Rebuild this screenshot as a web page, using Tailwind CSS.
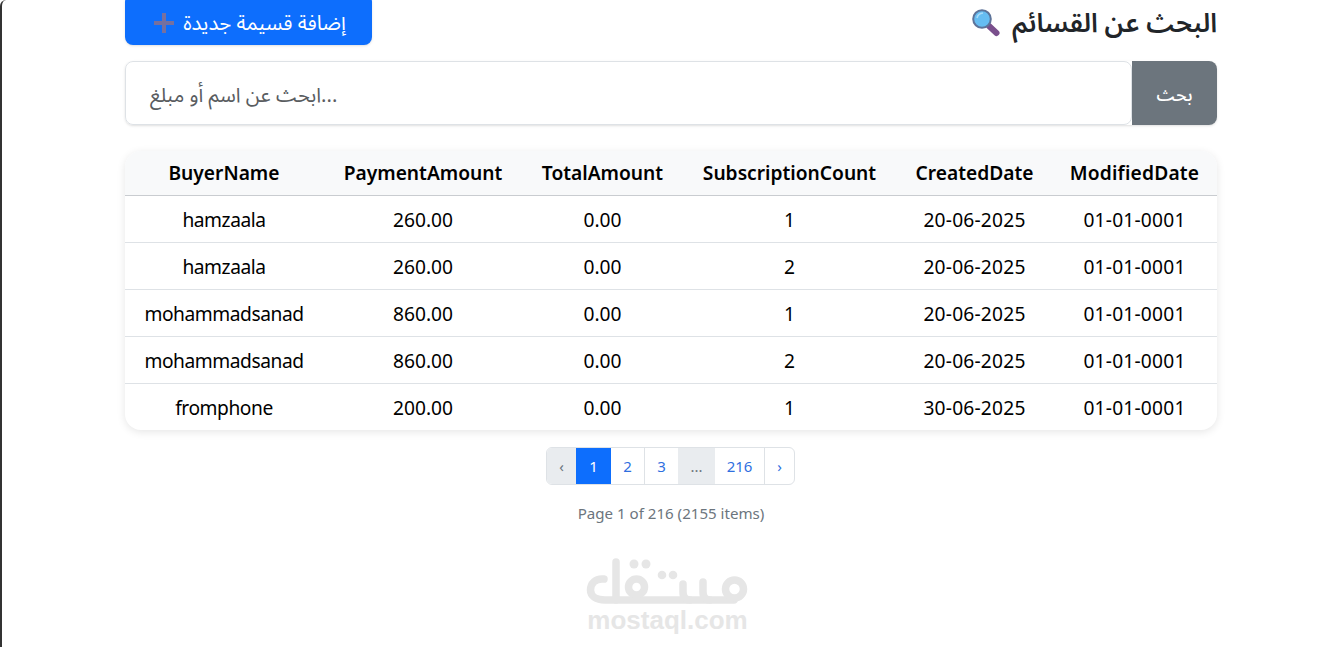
<!DOCTYPE html>
<html lang="ar">
<head>
<meta charset="utf-8">
<script src="https://cdn.jsdelivr.net/npm/@tailwindcss/browser@4"></script>
<title>Search</title>
</head>
<body class="bg-white font-['Noto_Sans','Noto_Sans_Arabic','DejaVu_Sans',sans-serif] text-[#212529]">
<div class="h-[647px] overflow-hidden border-l-2 border-[#333] rounded-tl-md relative">
  <div class="w-[1092px] ml-[123px]">
    <div class="flex items-center justify-between h-[45px]" dir="rtl">
      <h2 class="text-[26.4px] font-semibold leading-none flex items-center gap-3 text-[#212529]">البحث عن القسائم
        <svg width="28" height="28" viewBox="0 0 28 28">
          <path d="M17 17 L24.5 24" stroke="#7a4f8c" stroke-width="6" stroke-linecap="round"/>
          <circle cx="10" cy="10" r="8.8" fill="#66bdf2" stroke="#5d7399" stroke-width="2"/>
          <path d="M5 9 Q6 4.500 11 4" stroke="#a9dcf9" stroke-width="1.600" fill="none"/>
        </svg>
      </h2>
      <a class="w-[247px] h-[51px] self-end bg-[#0d6efd] text-white rounded-lg flex items-center justify-center gap-[9px] text-[20.4px] shadow-sm pl-[3px] pt-[6px]">إضافة قسيمة جديدة
        <svg width="20" height="20" viewBox="0 0 20 20"><path d="M10 0V20M0 10H20" stroke="#76709f" stroke-width="4"/></svg>
      </a>
    </div>
    <div class="flex mt-[16px] h-[64px] shadow-sm rounded-lg" dir="rtl">
      <button class="w-[85px] bg-[#6c757d] text-white text-[17.6px] font-medium rounded-r-lg pt-[2px]">بحث</button>
      <div class="flex-1 border border-[#dee2e6] rounded-lg flex items-center justify-end pl-6 pt-[2px] text-[20.2px] text-[#595c5f]">...ابحث عن اسم أو مبلغ</div>
    </div>
    <div class="mt-[26px] rounded-2xl overflow-hidden shadow-[0_2px_8px_rgba(0,0,0,0.1)]">
      <table class="w-full table-fixed text-center text-[19.2px] text-black [&_td]:pt-[4px] [&_th]:pt-[1px] [&_td:first-child]:tracking-[-0.45px] [&_td:nth-child(5)]:tracking-[0.2px] [&_td:nth-child(6)]:tracking-[0.2px]">
        <thead class="bg-[#f8f9fa]">
          <tr class="h-[44px] border-b border-[#c9ccd0]">
            <th class="w-[198px] font-semibold">BuyerName</th>
            <th class="w-[200px] font-semibold">PaymentAmount</th>
            <th class="w-[159px] font-semibold">TotalAmount</th>
            <th class="w-[215px] font-semibold">SubscriptionCount</th>
            <th class="w-[155px] font-semibold">CreatedDate</th>
            <th class="font-semibold tracking-[0.2px]">ModifiedDate</th>
          </tr>
        </thead>
        <tbody>
          <tr class="h-[47px] border-b border-[#dee2e6]"><td>hamzaala</td><td>260.00</td><td>0.00</td><td>1</td><td>20-06-2025</td><td>01-01-0001</td></tr>
          <tr class="h-[47px] border-b border-[#dee2e6]"><td>hamzaala</td><td>260.00</td><td>0.00</td><td>2</td><td>20-06-2025</td><td>01-01-0001</td></tr>
          <tr class="h-[47px] border-b border-[#dee2e6]"><td>mohammadsanad</td><td>860.00</td><td>0.00</td><td>1</td><td>20-06-2025</td><td>01-01-0001</td></tr>
          <tr class="h-[47px] border-b border-[#dee2e6]"><td>mohammadsanad</td><td>860.00</td><td>0.00</td><td>2</td><td>20-06-2025</td><td>01-01-0001</td></tr>
          <tr class="h-[47px]"><td>fromphone</td><td>200.00</td><td>0.00</td><td>1</td><td>30-06-2025</td><td>01-01-0001</td></tr>
        </tbody>
      </table>
    </div>
    <div class="flex justify-center mt-[17px] pr-[1px]">
      <div class="flex h-[38px] text-[15px] border border-[#dee2e6] rounded-md overflow-hidden text-[#2f6fdf]">
        <span class="w-[29px] bg-[#e9ecef] text-[#6c757d] flex items-center justify-center">‹</span>
        <span class="w-[35px] bg-[#0d6efd] text-white flex items-center justify-center">1</span>
        <span class="w-[34px] border-r border-[#dee2e6] flex items-center justify-center">2</span>
        <span class="w-[33px] flex items-center justify-center">3</span>
        <span class="w-[37px] bg-[#e9ecef] text-[#6c757d] flex items-center justify-center">...</span>
        <span class="w-[50px] border-r border-[#dee2e6] flex items-center justify-center">216</span>
        <span class="w-[29px] flex items-center justify-center">›</span>
      </div>
    </div>
    <p class="text-center text-[15.1px] text-[#6c757d] mt-[18px] leading-[21px]">Page 1 of 216 (2155 items)</p>
    <div class="flex flex-col items-center mt-[34px] pr-[7px]">
      <svg width="164" height="48" viewBox="587 558 164 48" fill="none" stroke="#e6e6e6" stroke-width="7.500" stroke-linecap="round" stroke-linejoin="round">
        <path d="M605 579 C596 578 591.500 584 591.500 590 C591.500 596 597 600 606 600 H735"/>
        <path d="M617 562 V600"/>
        <circle cx="637.500" cy="587" r="8"/>
        <path d="M684 584 V592 Q684 600 691 600 M704 582 V592 Q704 600 711 600"/>
        <circle cx="735.500" cy="589" r="9"/>
        <g fill="#e6e6e6" stroke="none"><circle cx="635" cy="564" r="4.500"/><circle cx="647" cy="564" r="4.500"/><circle cx="663" cy="575" r="4.300"/><circle cx="674" cy="575" r="4.300"/></g>
      </svg>
      <div class="text-[#e6e6e6] font-bold text-[26px] leading-[26px] font-['Liberation_Sans',sans-serif] mt-[1px]">mostaql.com</div>
    </div>
  </div>
</div>
</body>
</html>
